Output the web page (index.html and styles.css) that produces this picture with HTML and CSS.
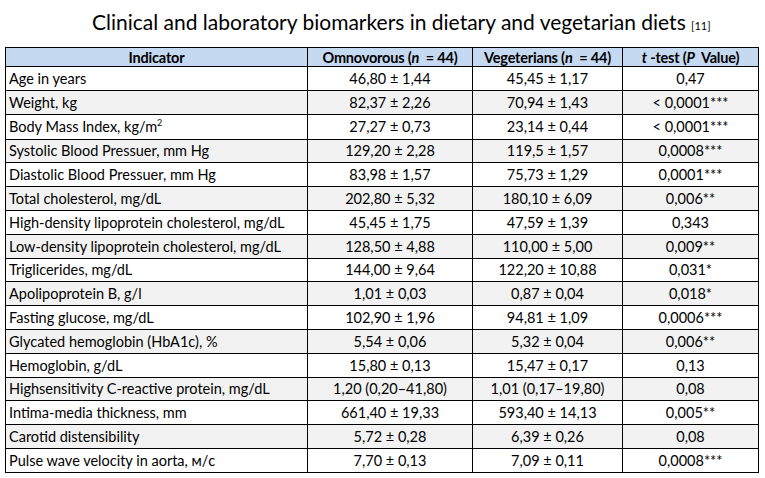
FILE: index.html
```html
<!DOCTYPE html>
<html>
<head>
<meta charset="utf-8">
<link rel="stylesheet" href="styles.css">
</head>
<body>
<div class="page">
  <h1 class="title">Clinical and laboratory biomarkers in dietary and vegetarian diets <span class="ref">[11]</span></h1>
  <table class="bio">
    <colgroup>
      <col class="c1"><col class="c2"><col class="c3"><col class="c4">
    </colgroup>
    <thead>
      <tr><th>Indicator</th><th>Omnovorous (<i>n</i> &nbsp;= 44)</th><th>Vegeterians (<i>n</i> &nbsp;= 44)</th><th><i>t</i> -test (<i>P</i> &nbsp;Value)</th></tr>
    </thead>
    <tbody>
      <tr><td>Age in years</td><td>46,80 ± 1,44</td><td>45,45 ± 1,17</td><td>0,47</td></tr>
      <tr><td>Weight, kg</td><td>82,37 ± 2,26</td><td>70,94 ± 1,43</td><td>&lt; 0,0001***</td></tr>
      <tr class="tall"><td>Body Mass Index, kg/m<sup>2</sup></td><td>27,27 ± 0,73</td><td>23,14 ± 0,44</td><td>&lt; 0,0001***</td></tr>
      <tr><td>Systolic Blood Pressuer, mm Hg</td><td>129,20 ± 2,28</td><td>119,5 ± 1,57</td><td>0,0008***</td></tr>
      <tr><td>Diastolic Blood Pressuer, mm Hg</td><td>83,98 ± 1,57</td><td>75,73 ± 1,29</td><td>0,0001***</td></tr>
      <tr><td>Total cholesterol, mg/dL</td><td>202,80 ± 5,32</td><td>180,10 ± 6,09</td><td>0,006**</td></tr>
      <tr><td>High-density lipoprotein cholesterol, mg/dL</td><td>45,45 ± 1,75</td><td>47,59 ± 1,39</td><td>0,343</td></tr>
      <tr><td>Low-density lipoprotein cholesterol, mg/dL</td><td>128,50 ± 4,88</td><td>110,00 ± 5,00</td><td>0,009**</td></tr>
      <tr><td>Triglicerides, mg/dL</td><td>144,00 ± 9,64</td><td>122,20 ± 10,88</td><td>0,031*</td></tr>
      <tr><td>Apolipoprotein B, g/l</td><td>1,01 ± 0,03</td><td>0,87 ± 0,04</td><td>0,018*</td></tr>
      <tr><td>Fasting glucose, mg/dL</td><td>102,90 ± 1,96</td><td>94,81 ± 1,09</td><td>0,0006***</td></tr>
      <tr><td>Glycated hemoglobin (HbA1c), %</td><td>5,54 ± 0,06</td><td>5,32 ± 0,04</td><td>0,006**</td></tr>
      <tr><td>Hemoglobin, g/dL</td><td>15,80 ± 0,13</td><td>15,47 ± 0,17</td><td>0,13</td></tr>
      <tr><td>Highsensitivity C-reactive protein, mg/dL</td><td>1,20 (0,20–41,80)</td><td>1,01 (0,17–19,80)</td><td>0,08</td></tr>
      <tr><td>Intima-media thickness, mm</td><td>661,40 ± 19,33</td><td>593,40 ± 14,13</td><td>0,005**</td></tr>
      <tr><td>Carotid distensibility</td><td>5,72 ± 0,28</td><td>6,39 ± 0,26</td><td>0,08</td></tr>
      <tr><td>Pulse wave velocity in aorta, м/c</td><td>7,70 ± 0,13</td><td>7,09 ± 0,11</td><td>0,0008***</td></tr>
    </tbody>
  </table>
</div>
</body>
</html>
```
FILE: styles.css
```css
html, body {
  margin: 0;
  padding: 0;
  background: #ffffff;
}
.page {
  width: 765px;
  height: 478px;
  padding: 11px 0 0 5px;
  box-sizing: border-box;
  font-family: "Lato", "Open Sans", sans-serif;
  color: #000;
}
.title {
  margin: 0 0 11px 0;
  padding-left: 87px;
  font-weight: normal;
  font-size: 21px;
  line-height: 21px;
  white-space: nowrap;
}
.ref {
  font-size: 11px;
}
.bio {
  border-collapse: collapse;
  table-layout: fixed;
  width: 753px;
  font-size: 14.5px;
  line-height: 17px;
}
.c1 { width: 302px; }
.c2 { width: 165px; }
.c3 { width: 150px; }
.c4 { width: 136px; }
.bio th, .bio td {
  border: 1px solid #000;
  padding: 0 3px;
  white-space: nowrap;
  overflow: hidden;
}
.bio th {
  background: #c5d9f1;
  font-weight: bold;
  height: 18px;
  text-align: center;
  letter-spacing: -0.2px;
}
.bio td {
  height: 22.8px;
  text-align: center;
}
.bio td:first-child {
  text-align: left;
}
.bio tbody tr:nth-child(even) td {
  background: #f2f2f2;
}
.bio tr.tall td {
  height: 24px;
}
.bio sup {
  font-size: 9px;
  line-height: 0;
}
```
